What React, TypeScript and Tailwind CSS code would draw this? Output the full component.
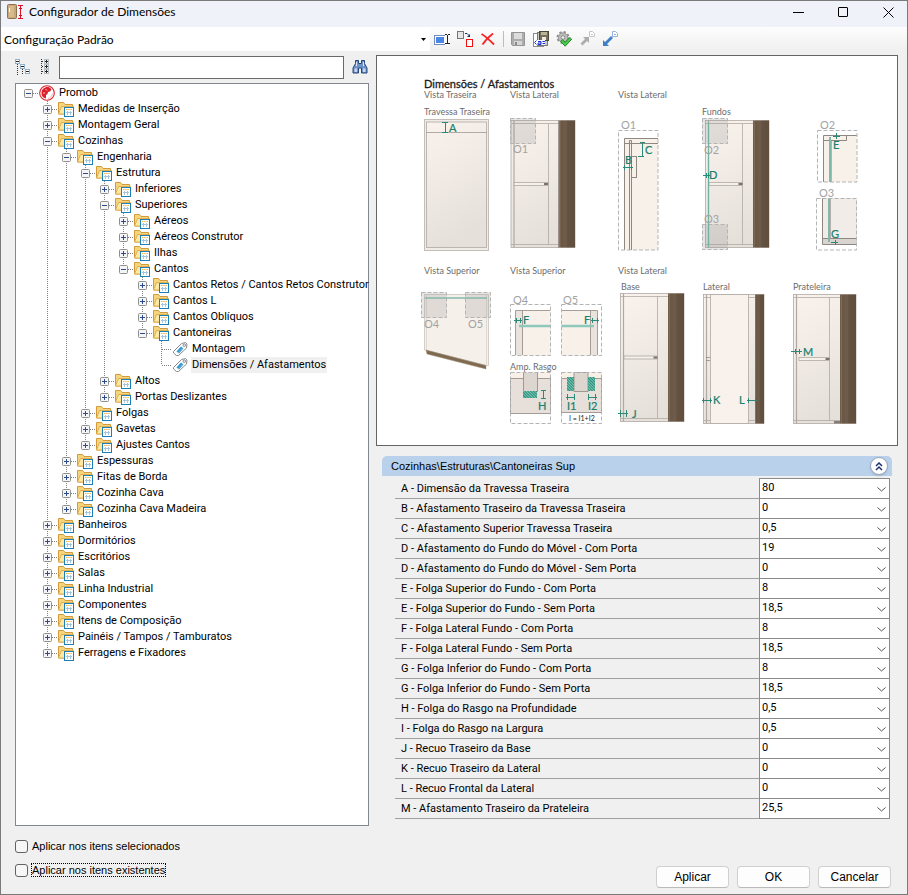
import React, { useState } from 'react';

interface TreeNode {
  label: string;
  open?: boolean;
  collapsed?: boolean;
  children?: TreeNode[];
}

const folder = (label: string): TreeNode => ({ label, collapsed: true });

const TREE: TreeNode = {
  label: 'Promob',
  open: true,
  children: [
    folder('Medidas de Inserção'),
    folder('Montagem Geral'),
    {
      label: 'Cozinhas',
      open: true,
      children: [
        {
          label: 'Engenharia',
          open: true,
          children: [
            {
              label: 'Estrutura',
              open: true,
              children: [
                folder('Inferiores'),
                {
                  label: 'Superiores',
                  open: true,
                  children: [
                    folder('Aéreos'),
                    folder('Aéreos Construtor'),
                    folder('Ilhas'),
                    {
                      label: 'Cantos',
                      open: true,
                      children: [
                        folder('Cantos Retos / Cantos Retos Construtor'),
                        folder('Cantos L'),
                        folder('Cantos Oblíquos'),
                        {
                          label: 'Cantoneiras',
                          open: true,
                          children: [{ label: 'Montagem' }, { label: 'Dimensões / Afastamentos' }],
                        },
                      ],
                    },
                  ],
                },
                folder('Altos'),
                folder('Portas Deslizantes'),
              ],
            },
            folder('Folgas'),
            folder('Gavetas'),
            folder('Ajustes Cantos'),
          ],
        },
        folder('Espessuras'),
        folder('Fitas de Borda'),
        folder('Cozinha Cava'),
        folder('Cozinha Cava Madeira'),
      ],
    },
    folder('Banheiros'),
    folder('Dormitórios'),
    folder('Escritórios'),
    folder('Salas'),
    folder('Linha Industrial'),
    folder('Componentes'),
    folder('Itens de Composição'),
    folder('Painéis / Tampos / Tamburatos'),
    folder('Ferragens e Fixadores'),
  ],
};

const FIELDS: [string, string][] = [
  ['A - Dimensão da Travessa Traseira', '80'],
  ['B - Afastamento Traseiro da Travessa Traseira', '0'],
  ['C - Afastamento Superior Travessa Traseira', '0,5'],
  ['D - Afastamento do Fundo do Móvel - Com Porta', '19'],
  ['D - Afastamento do Fundo do Móvel - Sem Porta', '0'],
  ['E - Folga Superior do Fundo - Com Porta', '8'],
  ['E - Folga Superior do Fundo - Sem Porta', '18,5'],
  ['F - Folga Lateral Fundo - Com Porta', '8'],
  ['F - Folga Lateral Fundo - Sem Porta', '18,5'],
  ['G - Folga Inferior do Fundo - Com Porta', '8'],
  ['G - Folga Inferior do Fundo - Sem Porta', '18,5'],
  ['H - Folga do Rasgo na Profundidade', '0,5'],
  ['I - Folga do Rasgo na Largura', '0,5'],
  ['J - Recuo Traseiro da Base', '0'],
  ['K - Recuo Traseiro da Lateral', '0'],
  ['L - Recuo Frontal da Lateral', '0'],
  ['M - Afastamento Traseiro da Prateleira', '25,5'],
];

/* ---------- icons ---------- */

function AppIcon() {
  return (
    <svg width="17" height="16" viewBox="0 0 17 16" aria-hidden="true">
      <rect x="0.500" y="0.500" width="9" height="14" rx="1" fill="#c9a877" stroke="#8d7350" />
      <rect x="2" y="2" width="5" height="11" fill="#d6bb90" />
      <rect x="2" y="4" width="1" height="4" fill="#fff" />
      <path d="M11 1.500h5M11 14.500h5M13.500 2v12M12 4.500h3M12 11.500h3" stroke="#e01020" fill="none" />
    </svg>
  );
}

function PromobIcon() {
  return (
    <svg width="16" height="16" viewBox="0 0 16 16" className="shrink-0" aria-hidden="true">
      <circle cx="8" cy="8" r="7.300" fill="#fff" stroke="#dc1f2b" strokeWidth="1.100" />
      <path d="M9 2C5 2 2.500 4.500 2.500 8c0 2 .8 3.600 2 4.600L7 13.500V10l1.500-1 .5-2 2-.5 1.500-2C11.500 3 10.500 2.200 9 2z" fill="#dc1f2b" />
      <path d="M6.500 4l1.500 1.500M4 8h2" stroke="#fff" strokeWidth="0.800" />
      <path d="M9 13.500c2.200-.6 4-2.300 4.500-5" stroke="#f3b0b3" fill="none" />
    </svg>
  );
}

function FolderIcon() {
  return (
    <svg width="16" height="16" viewBox="0 0 16 16" className="shrink-0" aria-hidden="true">
      <path d="M0.500 13V1.500h5l1.500 2h7.500V13z" fill="#f6d67c" stroke="#d39a3a" />
      <path d="M0.500 13L3.500 5.500h12L13 13z" fill="#fce9a6" stroke="#dfae52" />
      <rect x="6.500" y="6.500" width="9" height="9" fill="#fff" stroke="#1b7fb8" />
      <path d="M8 8.500h6" stroke="#f3b64a" strokeDasharray="1.500 0.700" />
      <path d="M8 11.500h6M9.500 10v4M12.500 10v4" stroke="#a3c6df" />
    </svg>
  );
}

function TagIcon() {
  return (
    <svg width="16" height="16" viewBox="0 0 16 16" className="shrink-0" aria-hidden="true">
      <path d="M1.500 10.500L9.500 2.500l4-1 1.500 1.500-.5 4-8 7.500h-2l-3-2.500z" fill="#fff" stroke="#85898e" />
      <circle cx="12.300" cy="4.200" r="1.300" fill="#eee" stroke="#777" strokeWidth="0.800" />
      <path d="M4.500 10.500l4.500-5 2.500 2-4.500 5z" fill="#2b93cf" />
      <path d="M6 12l4.500-5" stroke="#8cc6e8" strokeWidth="0.700" />
    </svg>
  );
}

function CollapseAllIcon() {
  return (
    <svg width="16" height="16" viewBox="0 0 16 16" aria-hidden="true">
      <path d="M2.500 5v11M7.500 10v6" stroke="#333" strokeDasharray="1 1" />
      <g fill="#fff" stroke="#8fb0c8">
        <rect x="0.500" y="0.500" width="4" height="4" />
        <rect x="5.500" y="5.500" width="4" height="4" />
        <rect x="10.500" y="10.500" width="4" height="4" />
      </g>
      <path d="M1 2.500h3M6 7.500h3M11 12.500h3" stroke="#222" />
    </svg>
  );
}

function ExpandAllIcon() {
  return (
    <svg width="16" height="16" viewBox="0 0 16 16" aria-hidden="true">
      <path d="M3.500 0v16" stroke="#333" strokeDasharray="1 1" />
      <path d="M4 2.500h3M4 7.500h3M4 12.500h3" stroke="#333" strokeDasharray="1 1" />
      <g fill="#fff" stroke="#b4bcc2">
        <rect x="6.500" y="0.500" width="4" height="4" />
        <rect x="6.500" y="5.500" width="4" height="4" />
        <rect x="6.500" y="10.500" width="4" height="4" />
      </g>
      <path d="M7 2.500h3M8.500 1v3M7 7.500h3M8.500 6v3M7 12.500h3M8.500 11v3" stroke="#222" />
    </svg>
  );
}

function BinocularsIcon() {
  return (
    <svg width="16" height="16" viewBox="0 0 16 16" aria-hidden="true">
      <path d="M3.500 1.500h3v3h3v-3h3v3l2.500 4.500v5H9.500V9h-3v5H1V9l2.500-4.500z" fill="#6f93c8" stroke="#27477c" />
      <path d="M2.500 9.500h2.500v3.500H2.500zM11 9.500h2.500v3.500H11z" fill="#c6d8f0" />
      <path d="M4.500 3v4M11.500 3v4" stroke="#dbe7f7" />
    </svg>
  );
}

function RenameIcon() {
  return (
    <svg width="16" height="16" viewBox="0 0 16 16" aria-hidden="true">
      <rect x="0.500" y="4.500" width="12" height="9" fill="#fff" stroke="#6f8fba" />
      <rect x="2" y="6" width="8" height="6" fill="#4a86e4" />
      <rect x="11" y="3" width="4" height="11" fill="#fbfbfb" />
      <path d="M13.500 4v9M11 3.500h2M14 3.500h2M11 12.500h2M14 12.500h2" stroke="#222" />
    </svg>
  );
}

function CopyConfigIcon() {
  return (
    <svg width="16" height="16" viewBox="0 0 16 16" aria-hidden="true">
      <rect x="0.500" y="0.500" width="6" height="7" fill="#e6e6e6" stroke="#777" />
      <path d="M8 2.500h2l2 2" stroke="#16306e" fill="none" />
      <path d="M13 3v3h-3z" fill="#16306e" />
      <rect x="9.500" y="8.500" width="6" height="7" fill="#fff" stroke="#f01010" />
    </svg>
  );
}

function DeleteIcon() {
  return (
    <svg width="16" height="16" viewBox="0 0 16 16" aria-hidden="true">
      <path d="M1.500 3C5 5 10 9.500 14 13.500M13 2.500C9 5.500 5 9.500 2.500 13.500" stroke="#f42424" strokeWidth="1.800" fill="none" />
    </svg>
  );
}

function SaveIcon() {
  return (
    <svg width="16" height="16" viewBox="0 0 16 16" aria-hidden="true">
      <path d="M1.500 1.500h13v13h-12l-1-1z" fill="#adadad" stroke="#959595" />
      <rect x="4" y="2" width="8" height="6" fill="#dcdcdc" />
      <rect x="4" y="10" width="8" height="4" fill="#d5d5d5" />
      <rect x="5" y="11" width="2" height="3" fill="#8a8a8a" />
    </svg>
  );
}

function SaveAsIcon() {
  return (
    <svg width="16" height="16" viewBox="0 0 16 16" aria-hidden="true">
      <rect x="0.500" y="2.500" width="10" height="13" fill="#fff" stroke="#8c8c8c" />
      <rect x="4.500" y="1.500" width="10" height="13" fill="#c9c9c9" stroke="#777" />
      <rect x="6.500" y="0.500" width="9" height="9" fill="#77715a" stroke="#4b483a" />
      <rect x="8" y="1" width="6" height="3" fill="#b9b49c" />
      <rect x="9" y="6" width="4" height="3" fill="#ecece4" />
      <rect x="1" y="9" width="11" height="5" fill="#fff" />
      <path d="M3.500 9.500L1.500 11.500l2 2M5 10.500h3v3H5V12h3M9.500 10.500H12M9.500 12.500H12" stroke="#1a2fd8" fill="none" />
    </svg>
  );
}

function GearCheckIcon() {
  return (
    <svg width="16" height="16" viewBox="0 0 16 16" aria-hidden="true">
      <circle cx="7" cy="6.500" r="5.500" fill="none" stroke="#8f8f8f" strokeWidth="2" strokeDasharray="2.300 2" />
      <circle cx="7" cy="6.500" r="4.700" fill="#bcbcbc" stroke="#959595" />
      <circle cx="7" cy="6.500" r="1.800" fill="#f5f5f5" stroke="#8b8b8b" />
      <path d="M4.500 10.500L6.500 8.800l2.700 2.500 4.500-4.800 2 1.700-6.500 7z" fill="#4cc84c" stroke="#238a26" />
    </svg>
  );
}

// Diagonal arrow beside a small page; the head points to the page or away from it
function TransferIcon({ color, page, inward }: { color: string; page: string; inward?: boolean }) {
  return (
    <svg width="16" height="16" viewBox="0 0 16 16" aria-hidden="true">
      <path d="M10.500 0.500h3l2 2v3h-5z" fill="#fff" stroke={page} />
      <path d="M12 3.500h2" stroke={page} />
      {inward ? (
        <path d="M10 6v6L8 10l-4.500 4.500-2-2L6 8 4 6z" fill={color} />
      ) : (
        <path d="M1 9v6h6l-2-2 6-6-2-2-6 6z" fill={color} />
      )}
    </svg>
  );
}

/* ---------- tree ---------- */

// One 19x16 cell of the dotted guide lines
function Guide({ kind }: { kind: 'blank' | 'line' | 'tee' | 'end' | 'root' }) {
  return (
    <svg width="19" height="16" viewBox="0 0 19 16" className="shrink-0" aria-hidden="true">
      <g stroke="#808080" strokeDasharray="1 1">
        {(kind === 'line' || kind === 'tee') && <path d="M9.500 0v16" />}
        {kind === 'end' && <path d="M9.500 0v8" />}
        {kind !== 'blank' && kind !== 'line' && <path d="M10 8.500h9" />}
      </g>
    </svg>
  );
}

function TreeRow({ node, depth, guides, last }: { node: TreeNode; depth: number; guides: boolean[]; last: boolean }) {
  const [open, setOpen] = useState(!!node.open);
  const leaf = !node.children && !node.collapsed;
  const selected = node.label === 'Dimensões / Afastamentos';
  const kind = depth === 0 ? 'root' : last ? 'end' : 'tee';

  return (
    <li role="treeitem" aria-expanded={leaf ? undefined : open} aria-selected={selected}>
      <div className="flex h-4 items-center">
        {guides.map((on, i) => (
          <Guide key={i} kind={on ? 'line' : 'blank'} />
        ))}
        <span className="relative flex shrink-0">
          <Guide kind={kind} />
          {!leaf && (
            <button
              type="button"
              aria-label={`Alternar ${node.label}`}
              onClick={() => setOpen(!open)}
              className="absolute top-1 left-[5px]"
            >
              <svg width="9" height="9" viewBox="0 0 9 9" aria-hidden="true">
                <rect x="0.500" y="0.500" width="8" height="8" rx="1" fill="#f5f5f5" stroke="#8f8f8f" />
                <path d={open ? 'M2 4.500h5' : 'M2 4.500h5M4.500 2v5'} stroke="#2c4a8e" />
              </svg>
            </button>
          )}
        </span>
        <span className="ml-px flex">
          {depth === 0 ? <PromobIcon /> : leaf ? <TagIcon /> : <FolderIcon />}
        </span>
        <span className={`ml-[3px] px-px leading-4 whitespace-nowrap ${selected ? 'bg-[#f0f0f0]' : ''}`}>
          {node.label}
        </span>
      </div>
      {open && node.children && (
        <ul role="group">
          {node.children.map((child, i) => (
            <TreeRow
              key={child.label}
              node={child}
              depth={depth + 1}
              guides={[...guides, depth > 0 && !last]}
              last={i === node.children!.length - 1}
            />
          ))}
        </ul>
      )}
    </li>
  );
}

/* ---------- technical drawing ---------- */

const TEAL = '#2a8a77';

function Note({ x, y, children }: { x: number; y: number; children: React.ReactNode }) {
  return <text x={x} y={y} fontSize="9" fill="#6d6d6d">{children}</text>;
}

function Ref({ x, y, children }: { x: number; y: number; children: React.ReactNode }) {
  return <text x={x} y={y} fontSize="11" fill="#a3a3a3">{children}</text>;
}

function Letter({ x, y, children }: { x: number; y: number; children: React.ReactNode }) {
  return <text x={x} y={y} fontSize="11" fill="#17806c" stroke="#17806c" strokeWidth="0.200">{children}</text>;
}

function Dashed({ x, y, w, h, shade }: { x: number; y: number; w: number; h: number; shade?: boolean }) {
  return (
    <rect
      x={x}
      y={y}
      width={w}
      height={h}
      fill={shade ? '#8c8c8c' : 'none'}
      fillOpacity="0.220"
      stroke="#b4b4b4"
      strokeDasharray="4 2"
    />
  );
}

interface CabinetProps {
  x: number;
  y: number;
  w: number;
  h: number;
  wood: number;
  shelf?: [number, number, number];
  door?: number;
}

// Side view of a cabinet with its wooden front on the right
function Cabinet({ x, y, w, h, wood, shelf, door }: CabinetProps) {
  return (
    <g stroke="#b0a9a3" strokeWidth="0.800">
      <rect x={x} y={y} width={w} height={h} fill="url(#body)" />
      <path d={`M${x} ${y + 3}H${wood}M${x} ${y + h - 3}H${wood}`} />
      <path d={`M${x + 3} ${y}V${y + h}`} strokeWidth="1.200" />
      {door && <path d={`M${door} ${y + 3}V${y + h - 3}`} />}
      {shelf && (
        <>
          <rect x={shelf[0]} y={shelf[2]} width={shelf[1] - shelf[0]} height="3" fill="#f4f0ec" />
          <rect x={shelf[1] - 4} y={shelf[2] + 0.5} width="4" height="2" fill="#7b736b" stroke="none" />
        </>
      )}
      <rect x={wood} y={y} width={x + w - wood} height={h} fill="url(#wood)" stroke="none" />
    </g>
  );
}

function Diagram() {
  return (
    <svg
      width="520"
      height="389"
      viewBox="377 56 520 389"
      role="img"
      aria-label="Dimensões / Afastamentos"
      className="font-[Lato,sans-serif]"
    >
      <defs>
        <linearGradient id="body" x1="0" y1="0" x2="0.300" y2="1">
          <stop offset="0" stopColor="#faf3ed" />
          <stop offset="1" stopColor="#e6e0db" />
        </linearGradient>
        <linearGradient id="wood">
          <stop offset="0" stopColor="#54463a" />
          <stop offset="0.060" stopColor="#8a765c" />
          <stop offset="0.160" stopColor="#6a5645" />
          <stop offset="0.450" stopColor="#6f5d4b" />
          <stop offset="0.550" stopColor="#655240" />
          <stop offset="1" stopColor="#5f4e3e" />
        </linearGradient>
        <pattern id="hatch" width="2" height="2" patternUnits="userSpaceOnUse" patternTransform="rotate(-45)">
          <rect width="2" height="2" fill="#7cc6b5" />
          <rect width="1" height="2" fill="#258d78" />
        </pattern>
      </defs>

      <text x="424" y="88" fontSize="11" fill="#1c1c1c" stroke="#1c1c1c" strokeWidth="0.300">Dimensões / Afastamentos</text>
      <Note x={424} y={98}>Vista Traseira</Note>
      <Note x={510} y={98}>Vista Lateral</Note>
      <Note x={618} y={98}>Vista Lateral</Note>
      <Note x={424} y={115}>Travessa Traseira</Note>
      <Note x={702} y={115}>Fundos</Note>
      <Note x={424} y={274}>Vista Superior</Note>
      <Note x={510} y={274}>Vista Superior</Note>
      <Note x={618} y={274}>Vista Lateral</Note>
      <Note x={621} y={290}>Base</Note>
      <Note x={703} y={290}>Lateral</Note>
      <Note x={793} y={290}>Prateleira</Note>

      {/* Travessa traseira */}
      <rect x="424.500" y="119.500" width="64" height="131" fill="#efebe7" stroke="#c4beb8" />
      <rect x="426.500" y="122" width="60" height="125.500" fill="url(#body)" stroke="#b0a9a3" strokeWidth="0.800" />
      <path d="M426 132.500h61" stroke="#a09993" strokeWidth="0.800" />
      <path d="M445.500 122v11M442 122.500h6M442 132.500h6" stroke={TEAL} />
      <Letter x={449} y={132}>A</Letter>

      <Cabinet x={511} y={120.5} w={64} h={127} wood={558.5} shelf={[514, 548, 182.5]} door={548.5} />
      <Dashed x={510.5} y={118.5} w={25} h={25} shade />
      <Ref x={513} y={153}>O1</Ref>

      {/* Detail O1 */}
      <Ref x={621} y={129}>O1</Ref>
      <path d="M624.500 250V138.500H658V250z" fill="#f8f1ea" />
      <g fill="none" stroke="#8f8781">
        <path d="M624.500 250V138.500H658M624.500 143.500H658" />
        <path d="M629.500 250V140.500h2V250" />
        <rect x="631.500" y="156.500" width="5" height="21" />
      </g>
      <Dashed x={618.5} y={130.5} w={39.5} h={119.5} />
      <path d="M642.500 142v15M640 142.500h5M638 156.500h6M623 167.500h10M624.500 165v5M631.500 165v5" stroke={TEAL} />
      <Letter x={645} y={154}>C</Letter>
      <Letter x={625} y={164}>B</Letter>

      {/* Fundos */}
      <Cabinet x={705.5} y={120.5} w={63.5} h={127} wood={753} shelf={[709, 742.5, 182.5]} door={742.5} />
      <Dashed x={702.5} y={118.5} w={25} h={25} shade />
      <Dashed x={702.5} y={224.5} w={25} h={25} shade />
      <path d="M708.500 122v125" stroke="#6fb3a5" strokeWidth="1.200" />
      <path d="M703 175.500h7M706.500 173v5M708.500 173v5" stroke={TEAL} />
      <Ref x={704} y={154}>O2</Ref>
      <Ref x={704} y={223}>O3</Ref>
      <Letter x={709} y={179}>D</Letter>

      {/* Details O2 and O3 */}
      <Ref x={820} y={129}>O2</Ref>
      <path d="M823.500 182V135.500H857V182z" fill="#f8f1ea" />
      <path d="M823.500 182V135.500H857M823.500 140.500h23v-5" fill="none" stroke="#8f8781" />
      <path d="M830 137v45" stroke="#7fb8ac" strokeWidth="2" />
      <path d="M831.500 141v41" stroke="#8f8781" strokeWidth="0.600" />
      <Dashed x={817.5} y={130.5} w={39.5} h={51.5} />
      <path d="M833 136.500h7M836.500 133v6" stroke={TEAL} />
      <Letter x={833} y={149}>E</Letter>

      <Ref x={819} y={197}>O3</Ref>
      <path d="M822.500 198v46.500H857M822.500 238.500H857" fill="none" stroke="#8f8781" />
      <rect x="823" y="198" width="34" height="40" fill="#f1ece8" />
      <rect x="823" y="239" width="34" height="5" fill="#dad4d0" />
      <path d="M829 198v44" stroke="#7fb8ac" strokeWidth="2" />
      <path d="M830.500 198v40" stroke="#8f8781" strokeWidth="0.600" />
      <Dashed x={816.5} y={198.5} w={40} h={51.5} />
      <path d="M831 242.500h7M835.500 240v5" stroke={TEAL} />
      <Letter x={831} y={238}>G</Letter>

      {/* Vista superior */}
      <path d="M424.500 294.500h64v71h-2L424.500 350z" fill="#f6f0eb" stroke="#c9c3bd" strokeWidth="0.800" />
      <path d="M426.500 295v55M486.500 295v70" stroke="#d0cac4" strokeWidth="0.600" />
      <path d="M426 350l60 15.500v3.500l-59-15z" fill="#7d6a50" stroke="#a3937b" strokeWidth="0.500" />
      <Dashed x={421.5} y={292.5} w={25} h={25} shade />
      <Dashed x={465.5} y={292.5} w={25} h={25} shade />
      <path d="M425 298h62" stroke="#84b8ad" strokeWidth="1.500" />
      <Ref x={424} y={328}>O4</Ref>
      <Ref x={468} y={328}>O5</Ref>

      {/* Details O4 and O5 */}
      <Ref x={513} y={304}>O4</Ref>
      <Ref x={563} y={304}>O5</Ref>
      <rect x="515.500" y="310.500" width="35" height="45" fill="#f8f1ea" />
      <rect x="516" y="311" width="6" height="44" fill="#e9e3de" />
      <path d="M550 310.500h-34.500V355M522.500 310.500V355" fill="none" stroke="#8f8781" strokeWidth="0.800" />
      <path d="M519 326h31.500" stroke="#8cc9bb" strokeWidth="2.500" />
      <Dashed x={510.5} y={304.5} w={40} h={51} />
      <path d="M514 320.500h8M516.500 318v5M520.500 318v5" stroke={TEAL} />
      <Letter x={523} y={324}>F</Letter>
      <rect x="561.500" y="310.500" width="36" height="45" fill="#f8f1ea" />
      <rect x="591" y="311" width="6" height="44" fill="#e9e3de" />
      <path d="M561 310.500h36.500V355M590.500 310.500V355" fill="none" stroke="#8f8781" strokeWidth="0.800" />
      <path d="M561.500 326H594" stroke="#8cc9bb" strokeWidth="2.500" />
      <Dashed x={561.5} y={304.5} w={40} h={51} />
      <path d="M591 320.500h8M592.500 318v5M597.500 318v5" stroke={TEAL} />
      <Letter x={584} y={324}>F</Letter>

      {/* Ampliação do rasgo */}
      <Note x={510} y={370}>Amp. Rasgo</Note>
      <rect x="510.500" y="372.500" width="40" height="6" fill="#f8efe6" />
      <rect x="510.500" y="378.500" width="40" height="35" fill="#e6dfda" stroke="#8f8781" strokeWidth="0.800" />
      <path d="M523.500 372.500v19h14v-19" fill="#dcd5d0" stroke="#8f8781" strokeWidth="0.800" />
      <rect x="523" y="391" width="14" height="7" fill="url(#hatch)" />
      <path d="M541 390.500h5M541 398.500h5M543.500 390v9" stroke={TEAL} />
      <Dashed x={510.5} y={372.5} w={40} h={51} />
      <Letter x={538} y={410}>H</Letter>
      <rect x="561.500" y="372.500" width="40" height="6" fill="#f8efe6" />
      <rect x="561.500" y="378.500" width="40" height="34" fill="#e6dfda" stroke="#8f8781" strokeWidth="0.800" />
      <rect x="574" y="372.500" width="14" height="19" fill="#dcd5d0" stroke="#8f8781" strokeWidth="0.800" />
      <rect x="567" y="377" width="7" height="14" fill="url(#hatch)" />
      <rect x="588" y="377" width="7" height="14" fill="url(#hatch)" />
      <path d="M566 397.500h9M567.500 394v6M574.500 394v6M588 397.500h9M588.500 394v6M595.500 394v6" stroke={TEAL} />
      <Dashed x={561.5} y={372.5} w={40} h={51} />
      <Letter x={567} y={410}>I1</Letter>
      <Letter x={588} y={410}>I2</Letter>
      <text x="569" y="421" fontSize="7" fill="#222">I = I1+I2</text>

      {/* Base */}
      <Cabinet x={620.5} y={293.5} w={63.5} h={128} wood={668} shelf={[624, 657.5, 356]} door={657.5} />
      <path d="M618 413.500h10M620.500 410v7M626.500 410v7" stroke={TEAL} />
      <Letter x={632} y={418}>J</Letter>

      {/* Lateral */}
      <Cabinet x={703.5} y={294.5} w={60.5} h={129} wood={755} />
      <rect x="710.500" y="294.500" width="38" height="129" fill="#f9f2ec" stroke="#b0a9a3" strokeWidth="0.800" />
      <path d="M706 357.500h4M706 360.500h4" stroke="#8f8781" strokeWidth="0.800" />
      <path d="M702 400.500h10M703.500 398v5M710.500 398v5M747 400.500h10M748.500 398v5M755.500 398v5" stroke={TEAL} />
      <Letter x={713} y={404}>K</Letter>
      <Letter x={739} y={404}>L</Letter>

      {/* Prateleira */}
      <Cabinet x={793.5} y={294.5} w={62.5} h={129} wood={840} shelf={[799, 829.5, 357.5]} door={829.5} />
      <rect x="834" y="421" width="6" height="2.500" fill="#857c75" />
      <path d="M791 351.500h11M795.500 349v5M799.500 349v5" stroke={TEAL} />
      <Letter x={803} y={356}>M</Letter>
    </svg>
  );
}

/* ---------- form ---------- */

function FieldRow({ id, label, value }: { id: string; label: string; value: string }) {
  return (
    <div className="flex h-5">
      <label htmlFor={id} className="flex-1 border-b border-[#a0a0a0] pl-[6px] leading-5">
        {label}
      </label>
      <div className="relative w-[131px]">
        <select
          id={id}
          defaultValue={value}
          className="block h-5 w-full appearance-none border-x border-b border-[#8a8a8a] bg-white pb-px pl-[2px] leading-4 outline-none"
        >
          <option>{value}</option>
        </select>
        <svg width="9" height="5" viewBox="0 0 9 5" className="pointer-events-none absolute top-2 right-1" aria-hidden="true">
          <path d="M0.500 0.500l4 3.500 4-3.500" fill="none" stroke="#555" />
        </svg>
      </div>
    </div>
  );
}

const captionButton = 'flex h-full w-[38px] items-center justify-center';
const dialogButton = 'h-[22px] w-[73px] rounded-[4px] border border-[#d0d0d0] border-b-[#bababa] bg-[#fdfdfd] text-[12px]';

export default function App() {
  const [expanded, setExpanded] = useState(true);

  return (
    <div className="flex min-h-screen flex-col border border-[#7a7a7a] bg-[#f0f0f0] font-['Liberation_Sans',Arial,sans-serif] text-[11px] text-black">
      {/* Title bar */}
      <header className="flex h-[26px] items-center bg-[#f0f2f9] pb-1 pl-[6px]">
        <AppIcon />
        <h1 className="ml-[5px] flex-1 font-[Lato,sans-serif] text-[12px] leading-4">Configurador de Dimensões</h1>
        <div className="flex h-full gap-[7px]">
          <button type="button" aria-label="Minimizar" className={captionButton}>
            <svg width="11" height="11" viewBox="0 0 11 11"><path d="M0 5.500h11" stroke="#000" /></svg>
          </button>
          <button type="button" aria-label="Maximizar" className={captionButton}>
            <svg width="11" height="11" viewBox="0 0 11 11"><rect x="0.500" y="0.500" width="9" height="9" rx="0.500" fill="none" stroke="#000" /></svg>
          </button>
          <button type="button" aria-label="Fechar" className={captionButton}>
            <svg width="11" height="11" viewBox="0 0 11 11"><path d="M0.500 0.500l10 10M10.500 0.500l-10 10" stroke="#000" /></svg>
          </button>
        </div>
      </header>

      {/* Toolbar */}
      <div className="flex h-6 items-center bg-linear-to-b from-[#fdfdfd] to-[#f0f0f0]">
        <div className="relative h-full w-[429px] bg-white">
          <select
            aria-label="Configuração"
            className="h-full w-full appearance-none pt-px pl-[3px] font-[Lato,sans-serif] text-[12px] outline-none"
          >
            <option>Configuração Padrão</option>
          </select>
          <svg width="5" height="3" viewBox="0 0 5 3" className="pointer-events-none absolute top-[11px] right-1" aria-hidden="true">
            <path d="M0 0h5L2.500 3z" fill="#000" />
          </svg>
        </div>
        <div className="flex items-center gap-[7px] pl-1">
          <button type="button" aria-label="Renomear"><RenameIcon /></button>
          <button type="button" aria-label="Copiar"><CopyConfigIcon /></button>
          <button type="button" aria-label="Excluir"><DeleteIcon /></button>
          <span className="h-4 w-px bg-[#bdbdbd]" />
          <button type="button" aria-label="Salvar" disabled className="-ml-px"><SaveIcon /></button>
          <button type="button" aria-label="Salvar como"><SaveAsIcon /></button>
          <button type="button" aria-label="Validar"><GearCheckIcon /></button>
          <button type="button" aria-label="Exportar" disabled><TransferIcon color="#adadad" page="#c4c4c4" inward /></button>
          <button type="button" aria-label="Importar"><TransferIcon color="#3f7fc6" page="#93b4dc" /></button>
        </div>
      </div>

      <div className="flex flex-1 gap-[7px] pr-[9px] pl-[14px]">
        {/* Left: search and tree */}
        <div className="flex w-[354px] shrink-0 flex-col pt-1">
          <div className="flex h-6 items-center">
            <button type="button" aria-label="Recolher tudo"><CollapseAllIcon /></button>
            <button type="button" aria-label="Expandir tudo" className="ml-[7px]"><ExpandAllIcon /></button>
            <input
              type="text"
              aria-label="Pesquisar"
              className="ml-[5px] h-[23px] min-w-0 flex-1 border border-[#6a6a6a] bg-white px-1 outline-none"
            />
            <button type="button" aria-label="Localizar" className="mr-px ml-2"><BinocularsIcon /></button>
          </div>
          <div className="mt-1 flex-1 border border-[#828790] bg-white py-px pl-[3px] font-[Roboto,sans-serif]">
            <ul role="tree">
              <TreeRow node={TREE} depth={0} guides={[]} last />
            </ul>
          </div>
        </div>

        {/* Right: drawing and values */}
        <div className="flex min-w-0 flex-1 flex-col pt-1">
          <div className="flex justify-center overflow-hidden border border-[#646464] bg-white">
            <Diagram />
          </div>
          <section className="mt-[10px] px-[6px]">
            <div className="flex h-5 items-center rounded-t-[5px] bg-[#b9d1ea] pr-1 pl-[9px]">
              <h2 className="flex-1">Cozinhas\Estruturas\Cantoneiras Sup</h2>
              <button
                type="button"
                aria-label="Recolher grupo"
                onClick={() => setExpanded(!expanded)}
                className="flex size-[18px] items-center justify-center rounded-full border border-[#9aa6ba] bg-white shadow-sm"
              >
                <svg width="8" height="9" viewBox="0 0 8 9" aria-hidden="true">
                  <path d="M1 4l3-3 3 3M1 8l3-3 3 3" fill="none" stroke="#1f3170" strokeWidth="1.500" />
                </svg>
              </button>
            </div>
            {expanded && (
              <div className="pt-[2px] pr-[2px] pl-[13px] font-[Roboto,sans-serif]">
                <div className="ml-auto w-[131px] border-b border-[#8a8a8a]" />
                {FIELDS.map(([label, value], i) => (
                  <FieldRow key={label} id={`campo-${i}`} label={label} value={value} />
                ))}
              </div>
            )}
          </section>
        </div>
      </div>

      {/* Footer */}
      <footer className="flex h-[68px] shrink-0 justify-between pr-4 pb-[6px] pl-[14px]">
        <div className="flex flex-col gap-2 pt-3">
          <label className="flex h-4 items-center gap-1">
            <input type="checkbox" className="size-[13px] appearance-none rounded-[3px] border border-[#626262] bg-[#f6f6f6]" />
            Aplicar nos itens selecionados
          </label>
          <label className="flex h-4 items-center gap-[3px]">
            <input type="checkbox" className="size-[13px] appearance-none rounded-[3px] border border-[#626262] bg-[#f6f6f6]" />
            <span className="border border-dotted border-black leading-3">Aplicar nos itens existentes</span>
          </label>
        </div>
        <div className="flex items-end gap-2">
          <button type="button" className={dialogButton}>Aplicar</button>
          <button type="button" className={dialogButton}>OK</button>
          <button type="button" className={dialogButton}>Cancelar</button>
        </div>
      </footer>
    </div>
  );
}
